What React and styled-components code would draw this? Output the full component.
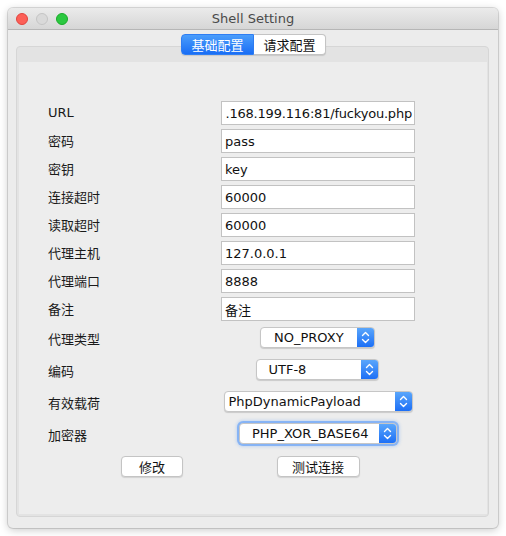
import React from "react";
import styled, { createGlobalStyle } from "styled-components";

const GlobalStyle = createGlobalStyle`
  html, body {
    margin: 0;
    padding: 0;
    background: #ffffff;
  }
  body {
    font-family: "DejaVu Sans", "Noto Sans CJK SC", sans-serif;
    font-size: 13px;
    color: #1a1a1a;
  }
`;

const Page = styled.div`
  width: 506px;
  height: 536px;
  padding: 8px 8px 0 8px;
  box-sizing: border-box;
`;

const Window = styled.div`
  width: 490px;
  height: 520px;
  background: #ececec;
  border-radius: 5px;
  box-shadow: 0 0 0 1px rgba(0, 0, 0, 0.12), 0 2px 8px rgba(0, 0, 0, 0.22);
  display: flex;
  flex-direction: column;
  overflow: hidden;
`;

const TitleBar = styled.div`
  height: 21px;
  flex-shrink: 0;
  display: flex;
  align-items: center;
  justify-content: center;
  position: relative;
  background: linear-gradient(#ebebeb, #d6d6d6);
  border-bottom: 1px solid #b6b6b6;
`;

const Lights = styled.div`
  position: absolute;
  left: 8px;
  top: 5px;
  display: flex;
  gap: 8px;
`;

const Light = styled.span`
  width: 12px;
  height: 12px;
  border-radius: 50%;
  box-sizing: border-box;
  background: ${(p) => p.$color};
  border: 1px solid ${(p) => p.$edge};
`;

const Title = styled.div`
  font-family: "DejaVu Sans", sans-serif;
  font-size: 13px;
  color: #4a4a4a;
`;

const Body = styled.div`
  flex: 1;
  display: flex;
  flex-direction: column;
  padding: 4px 9px 11px 8px;
`;

const TabRow = styled.div`
  display: flex;
  justify-content: center;
  position: relative;
  z-index: 1;
  margin-left: 2px;
`;

const Tab = styled.div`
  height: 21px;
  width: ${(p) => p.$w}px;
  box-sizing: border-box;
  display: flex;
  align-items: center;
  justify-content: center;
  white-space: nowrap;
  font-family: "Noto Sans CJK SC", sans-serif;
  font-size: 13px;
  color: ${(p) => (p.$active ? "#ffffff" : "#111111")};
  background: ${(p) =>
    p.$active ? "linear-gradient(#4a9dfb, #1a6ef5)" : "#ffffff"};
  border: 1px solid ${(p) => (p.$active ? "#2f7ef3" : "#c4c4c4")};
  border-left-width: ${(p) => (p.$active ? "1px" : "0")};
  border-radius: ${(p) => (p.$active ? "4px 0 0 4px" : "0 4px 4px 0")};
  box-shadow: 0 1px 1px rgba(0, 0, 0, 0.12);
`;

const Panel = styled.div`
  flex: 1;
  margin-top: -9px;
  border: 1px solid #d6d6d6;
  border-radius: 4px;
  background: #e3e3e3;
  padding: 15px 1px 2px 2px;
  display: flex;
`;

const Inner = styled.div`
  flex: 1;
  background: #ededed;
  padding: 39px 0 0 29px;
  display: grid;
  grid-template-columns: 173px 194px;
  row-gap: 4px;
  align-content: start;
`;

const Label = styled.div`
  display: flex;
  align-items: center;
  font-family: "DejaVu Sans", "Noto Sans CJK SC", sans-serif;
  font-size: 13px;
  color: #1a1a1a;
  padding-bottom: 1px;
`;

const Field = styled.div`
  box-sizing: border-box;
  height: 24px;
  background: #ffffff;
  border: 1px solid #c2c2c2;
  padding: 0 2px 0 3px;
  display: flex;
  align-items: center;
  justify-content: ${(p) => (p.$end ? "flex-end" : "flex-start")};
  letter-spacing: ${(p) => (p.$end ? "-0.2px" : "0")};
  overflow: hidden;
  white-space: nowrap;
  font-family: "DejaVu Sans", "Noto Sans CJK SC", sans-serif;
  font-size: 13px;
  color: #111;
`;

const SelectRow = styled.div`
  grid-column: 1 / span 2;
  height: 28px;
  display: grid;
  grid-template-columns: 173px 194px;
`;

const SelectCell = styled.div`
  display: flex;
  justify-content: center;
  align-items: flex-start;
  padding-top: 2px;
`;

const Select = styled.div`
  box-sizing: border-box;
  width: ${(p) => p.$w}px;
  height: 21px;
  margin-left: ${(p) => p.$shift || 0}px;
  background: #ffffff;
  border-radius: 4px;
  border: 1px solid #c6c6c6;
  box-shadow: ${(p) =>
    p.$focus
      ? "0 0 0 2px rgba(80, 150, 250, 0.55), 0 0 3px 3px rgba(80, 150, 250, 0.25)"
      : "0 1px 1px rgba(0, 0, 0, 0.15)"};
  display: flex;
  overflow: hidden;
`;

const SelectText = styled.div`
  flex: 1;
  display: flex;
  align-items: center;
  padding-left: ${(p) => p.$pad}px;
  font-family: "DejaVu Sans", sans-serif;
  font-size: 13px;
  color: #111;
  white-space: nowrap;
`;

const Arrow = styled.div`
  width: 17px;
  background: linear-gradient(#5aa6fb, #1c6ff6);
  display: flex;
  align-items: center;
  justify-content: center;
`;

const ButtonRow = styled.div`
  grid-column: 1 / span 2;
  display: grid;
  grid-template-columns: 173px 194px;
  height: 21px;
  margin-top: 3px;
`;

const Button = styled.div`
  box-sizing: border-box;
  height: 21px;
  width: ${(p) => p.$w}px;
  justify-self: ${(p) => p.$justify || "center"};
  margin-right: ${(p) => p.$mr || 0}px;
  background: #ffffff;
  border: 1px solid #c4c4c4;
  border-radius: 4px;
  box-shadow: 0 1px 1px rgba(0, 0, 0, 0.12);
  display: flex;
  align-items: center;
  justify-content: center;
  font-family: "Noto Sans CJK SC", sans-serif;
  font-size: 13px;
  color: #111;
`;

const Chevrons = () => (
  <svg width="9" height="13" viewBox="0 0 9 13">
    <path
      d="M1.5 4.5 L4.5 1.5 L7.5 4.5 M1.5 8.5 L4.5 11.5 L7.5 8.5"
      fill="none"
      stroke="#ffffff"
      strokeWidth="1.4"
      strokeLinecap="round"
      strokeLinejoin="round"
    />
  </svg>
);

const fields = [
  { label: "URL", value: ".168.199.116:81/fuckyou.php", end: true },
  { label: "密码", value: "pass" },
  { label: "密钥", value: "key" },
  { label: "连接超时", value: "60000" },
  { label: "读取超时", value: "60000" },
  { label: "代理主机", value: "127.0.0.1" },
  { label: "代理端口", value: "8888" },
  { label: "备注", value: "备注" },
];

const selects = [
  { label: "代理类型", value: "NO_PROXY", w: 115, pad: 13, shift: -1 },
  { label: "编码", value: "UTF-8", w: 123, pad: 12, shift: -2 },
  { label: "有效载荷", value: "PhpDynamicPayload", w: 189, pad: 4, shift: 0 },
  { label: "加密器", value: "PHP_XOR_BASE64", w: 158, pad: 12, shift: 0, focus: true },
];

export default function App() {
  return (
    <Page>
      <GlobalStyle />
      <Window>
        <TitleBar>
          <Lights>
            <Light $color="#fc5f57" $edge="#e0443e" />
            <Light $color="#d9d9d9" $edge="#c4c4c4" />
            <Light $color="#2bc840" $edge="#1aab29" />
          </Lights>
          <Title>Shell Setting</Title>
        </TitleBar>
        <Body>
          <TabRow>
            <Tab $active $w={73}>基础配置</Tab>
            <Tab $w={72}>请求配置</Tab>
          </TabRow>
          <Panel>
            <Inner>
              {fields.map((f) => (
                <React.Fragment key={f.label}>
                  <Label>{f.label}</Label>
                  <Field $end={f.end}>{f.value}</Field>
                </React.Fragment>
              ))}
              {selects.map((s) => (
                <SelectRow key={s.label}>
                  <Label>{s.label}</Label>
                  <SelectCell>
                    <Select $w={s.w} $focus={s.focus} $shift={s.shift}>
                      <SelectText $pad={s.pad}>{s.value}</SelectText>
                      <Arrow>
                        <Chevrons />
                      </Arrow>
                    </Select>
                  </SelectCell>
                </SelectRow>
              ))}
              <ButtonRow>
                <Button $w={62} $justify="end" $mr={38}>修改</Button>
                <Button $w={83}>测试连接</Button>
              </ButtonRow>
            </Inner>
          </Panel>
        </Body>
      </Window>
    </Page>
  );
}
